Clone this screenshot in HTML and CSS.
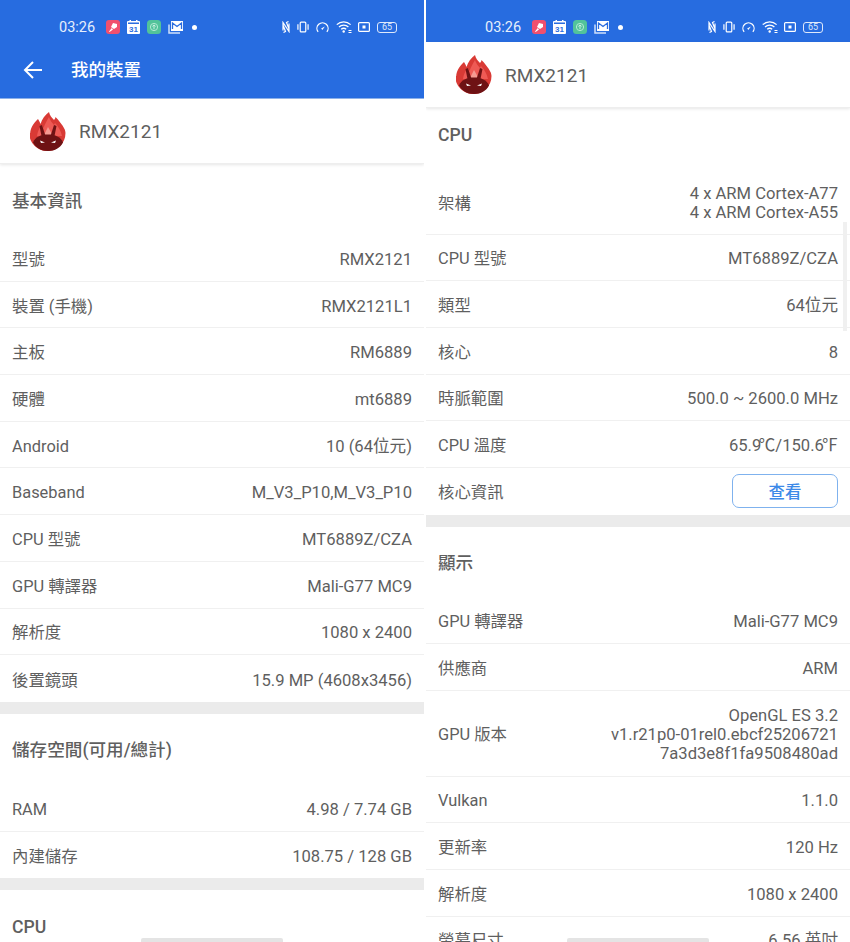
FILE: index.html
```html
<!DOCTYPE html>
<html lang="zh-Hant">
<head>
  <meta charset="UTF-8" />
  <meta name="viewport" content="width=device-width, initial-scale=1.0" />
  <title>我的裝置</title>
  <link rel="stylesheet" href="styles.css">
</head>
<body>
  <svg class="defs" width="0" height="0">
    <symbol id="i-app1" viewBox="0 0 14 14">
      <rect width="14" height="14" rx="3" fill="#f0506e"/>
      <path d="M7 3l4 1 0 3-3 2-3-2zM5.800 8L3 11.500l.6.6L7 9.500z" fill="#fff"/>
    </symbol>
    <symbol id="i-up" viewBox="0 0 14 14">
      <rect width="14" height="14" rx="3.500" fill="#52c39a"/>
      <circle cx="7" cy="7" r="3.600" fill="none" stroke="#b5ead5" stroke-width="1"/>
      <path d="M7 9.200V5M5.400 6.500L7 4.900l1.600 1.600" fill="none" stroke="#d8f5ea" stroke-width=".9"/>
    </symbol>
    <symbol id="i-mail" viewBox="0 0 15 14">
      <path d="M1 4.500v8.500h11" fill="none" stroke="#cfe0fa" stroke-width="1.500"/>
      <rect x="3" y="1" width="12" height="10" fill="#fff"/>
      <path d="M4.500 9V3l4.500 3.500L13.500 3v6" fill="none" stroke="#2a6de0" stroke-width="1.300"/>
    </symbol>
    <symbol id="i-nfc" viewBox="0 0 8 12">
      <path d="M1 9.500V1.500l6 9V2.500M1 4l2.500 6.500L1.500 11.500M7 8L4.500 1.500 6.500.5" fill="none" stroke="#fff" stroke-width="1.200"/>
    </symbol>
    <symbol id="i-vib" viewBox="0 0 13 12">
      <rect x="3.500" y=".7" width="6" height="10.600" rx="1" fill="none" stroke="#fff" stroke-width="1.300"/>
      <path d="M1 3v6M12 3v6" stroke="#fff" stroke-width="1.300"/>
    </symbol>
    <symbol id="i-gauge" viewBox="0 0 14 12">
      <path d="M2.300 11.200A6 6 0 1 1 11.700 11.200" fill="none" stroke="#fff" stroke-width="1.300"/>
      <path d="M5.500 7.500l4-2-2.600 3.600z" fill="#fff"/>
    </symbol>
    <symbol id="i-wifi" viewBox="0 0 16 12">
      <path d="M.8 3.600a10 10 0 0 1 13.800 0M3 6a7 7 0 0 1 9.400 0M5.200 8.300a3.800 3.800 0 0 1 5 0" fill="none" stroke="#fff" stroke-width="1.300"/>
      <circle cx="7.700" cy="10.500" r="1.200" fill="#fff"/>
      <path d="M12.500 9.500h3M12.500 11.500h3" stroke="#fff" stroke-width="1"/>
    </symbol>
    <symbol id="i-box" viewBox="0 0 12 10">
      <rect x=".6" y=".6" width="10.800" height="8.800" rx="1" fill="none" stroke="#fff" stroke-width="1.200"/>
      <rect x="4.500" y="3.500" width="3" height="3" fill="#fff"/>
    </symbol>
    <symbol id="i-logo" viewBox="0 0 36 39">
      <path d="M.2 21C.5 16 3 12 8 7c1 2 2 3 2.500 5C12 7 15 3 19 0c.5 3 3 6 5 8 1-1 1.500-2 1.500-3 3 3 7 8 9 12 .7 1.500 1 3 1 4a18 18 0 0 1-36.300 0z" fill="#d93a35"/>
      <path d="M7 24C8 18 10 15 12 13l1.500 3C15 12 17 8 19 5c1 3 3 6 5 8l1-2c3 3 6 8 7 13z" fill="#ee5a55"/>
      <path d="M14 23l4-8 4.500 8z" fill="#f59a92"/>
      <path d="M3 30.500C5 25 11 22.500 18 22.500S31 25 33 30.500C30 36 25 39 18 39S6 36 3 30.500z" fill="#6e1214"/>
      <path d="M11.500 24l-2-10 2.500-1 3.500 11zM24.500 24l2-10-2.500-1-3.500 11z" fill="#6e1214"/>
      <path d="M10 28.500l5 2-4 .6zM26 28.500l-5 2 4 .6z" fill="#fff"/>
    </symbol>
  </svg>

  <div class="screen">
    <section class="pane">
      <div class="appbar">
        <div class="statusbar">
          <span class="clock">03:26</span>
          <div class="notif-icons">
            <svg class="ic-14"><use href="#i-app1"/></svg>
            <svg class="ic-cal" viewBox="0 0 13 14">
              <rect y="1" width="13" height="13" rx="1" fill="#fff"/>
              <rect x="2.500" width="1.500" height="3" fill="#fff"/>
              <rect x="9" width="1.500" height="3" fill="#fff"/>
              <rect x="1" y="2.500" width="11" height="1.500" fill="#2a6de0"/>
              <text x="6.500" y="12" class="cal-num">31</text>
            </svg>
            <svg class="ic-14"><use href="#i-up"/></svg>
            <svg class="ic-mail"><use href="#i-mail"/></svg>
            <span class="dot"></span>
          </div>
          <div class="sys-icons">
            <svg class="ic-nfc"><use href="#i-nfc"/></svg>
            <svg class="ic-vib"><use href="#i-vib"/></svg>
            <svg class="ic-gauge"><use href="#i-gauge"/></svg>
            <svg class="ic-wifi"><use href="#i-wifi"/></svg>
            <svg class="ic-box"><use href="#i-box"/></svg>
            <span class="battery">65</span>
          </div>
        </div>
        <div class="toolbar">
          <svg class="back" viewBox="0 0 20 20"><path d="M19 10H2M10 2l-8 8 8 8" fill="none" stroke="#fff" stroke-width="2"/></svg>
          <h1>我的裝置</h1>
        </div>
      </div>
      <div class="device short">
        <svg class="logo"><use href="#i-logo"/></svg>
        <span>RMX2121</span>
      </div>

      <h2 class="title">基本資訊</h2>
      <div class="row"><span>型號</span><span>RMX2121</span></div>
      <div class="row"><span>裝置 (手機)</span><span>RMX2121L1</span></div>
      <div class="row"><span>主板</span><span>RM6889</span></div>
      <div class="row"><span>硬體</span><span>mt6889</span></div>
      <div class="row"><span>Android</span><span>10 (64位元)</span></div>
      <div class="row"><span>Baseband</span><span>M_V3_P10,M_V3_P10</span></div>
      <div class="row"><span>CPU 型號</span><span>MT6889Z/CZA</span></div>
      <div class="row"><span>GPU 轉譯器</span><span>Mali-G77 MC9</span></div>
      <div class="row"><span>解析度</span><span>1080 x 2400</span></div>
      <div class="row last"><span>後置鏡頭</span><span>15.9 MP (4608x3456)</span></div>
      <div class="band"></div>

      <h2 class="title">儲存空間(可用/總計)</h2>
      <div class="row"><span>RAM</span><span>4.98 / 7.74 GB</span></div>
      <div class="row last"><span>內建儲存</span><span>108.75 / 128 GB</span></div>
      <div class="band"></div>

      <h2 class="title">CPU</h2>
      <div class="home-bar"></div>
    </section>

    <section class="pane">
      <div class="appbar">
        <div class="statusbar">
          <span class="clock">03:26</span>
          <div class="notif-icons">
            <svg class="ic-14"><use href="#i-app1"/></svg>
            <svg class="ic-cal" viewBox="0 0 13 14">
              <rect y="1" width="13" height="13" rx="1" fill="#fff"/>
              <rect x="2.500" width="1.500" height="3" fill="#fff"/>
              <rect x="9" width="1.500" height="3" fill="#fff"/>
              <rect x="1" y="2.500" width="11" height="1.500" fill="#2a6de0"/>
              <text x="6.500" y="12" class="cal-num">31</text>
            </svg>
            <svg class="ic-14"><use href="#i-up"/></svg>
            <svg class="ic-mail"><use href="#i-mail"/></svg>
            <span class="dot"></span>
          </div>
          <div class="sys-icons">
            <svg class="ic-nfc"><use href="#i-nfc"/></svg>
            <svg class="ic-vib"><use href="#i-vib"/></svg>
            <svg class="ic-gauge"><use href="#i-gauge"/></svg>
            <svg class="ic-wifi"><use href="#i-wifi"/></svg>
            <svg class="ic-box"><use href="#i-box"/></svg>
            <span class="battery">65</span>
          </div>
        </div>
      </div>
      <div class="device">
        <svg class="logo"><use href="#i-logo"/></svg>
        <span>RMX2121</span>
      </div>

      <h2 class="title scrolled">CPU</h2>
      <div class="row tall-2"><span>架構</span><span class="val">4 x ARM Cortex-A77<br>4 x ARM Cortex-A55</span></div>
      <div class="row"><span>CPU 型號</span><span>MT6889Z/CZA</span></div>
      <div class="row"><span>類型</span><span>64位元</span></div>
      <div class="row"><span>核心</span><span>8</span></div>
      <div class="row"><span>時脈範圍</span><span>500.0 ~ 2600.0 MHz</span></div>
      <div class="row"><span>CPU 溫度</span><span>65.9<i class="deg">℃</i>/150.6<i class="deg">℉</i></span></div>
      <div class="row last"><span>核心資訊</span><button class="view-btn">查看</button></div>
      <div class="band"></div>

      <h2 class="title">顯示</h2>
      <div class="row"><span>GPU 轉譯器</span><span>Mali-G77 MC9</span></div>
      <div class="row"><span>供應商</span><span>ARM</span></div>
      <div class="row tall-3"><span>GPU 版本</span><span class="val">OpenGL ES 3.2<br>v1.r21p0-01rel0.ebcf25206721<br>7a3d3e8f1fa9508480ad</span></div>
      <div class="row"><span>Vulkan</span><span>1.1.0</span></div>
      <div class="row"><span>更新率</span><span>120 Hz</span></div>
      <div class="row"><span>解析度</span><span>1080 x 2400</span></div>
      <div class="row"><span>螢幕尺寸</span><span>6.56 英吋</span></div>
      <div class="scrollbar"></div>
      <div class="home-bar"></div>
    </section>
  </div>
</body>
</html>
```

FILE: styles.css
```css
body {
  margin: 0;
  background: #fff;
  font-family: Roboto, "Noto Sans CJK TC", sans-serif;
  color: #5f5f5f;
}
.defs {
  position: absolute;
}
.cal-num {
  font-family: "Liberation Sans", sans-serif;
  font-size: 8px;
  font-weight: 700;
  fill: #2a6de0;
  text-anchor: middle;
}
.screen {
  display: flex;
  gap: 2px;
  height: 942px;
  overflow: hidden;
}
.pane {
  position: relative;
  width: 424px;
  height: 942px;
  overflow: hidden;
}
.appbar {
  background: #276ce0;
  color: #fff;
}
.statusbar {
  display: flex;
  align-items: center;
  height: 42px;
  padding: 12px 27px 0 59px;
  box-sizing: border-box;
}
.clock {
  width: 47px;
  padding-top: 2px;
  font-size: 14.5px;
  line-height: 18px;
  color: #e6effc;
}
.notif-icons {
  display: flex;
  align-items: center;
  gap: 7px;
}
.sys-icons {
  display: flex;
  align-items: center;
  gap: 7px;
  margin-left: auto;
}
.ic-14 { width: 14px; height: 14px; }
.ic-cal { width: 13px; height: 14px; }
.ic-mail { width: 15px; height: 14px; }
.ic-nfc { width: 8px; height: 12px; }
.ic-vib { width: 12px; height: 12px; }
.ic-gauge { width: 13px; height: 12px; }
.ic-wifi { width: 16px; height: 12px; margin-right: -1px; }
.ic-box { width: 12px; height: 10px; }
.dot {
  width: 5px;
  height: 5px;
  border-radius: 50%;
  background: #fff;
  margin-left: 2px;
}
.battery {
  width: 20px;
  height: 11px;
  box-sizing: border-box;
  border: 1px solid #dfe9fb;
  border-radius: 3px;
  font-size: 9px;
  line-height: 9px;
  text-align: center;
  color: #dfe9fb;
}
.toolbar {
  display: flex;
  align-items: center;
  gap: 28px;
  height: 56px;
  padding-left: 23px;
  border-bottom: 1px solid #8fb4ee;
}
.back {
  width: 20px;
  height: 20px;
}
h1 {
  margin: 0;
  font-size: 17.5px;
  line-height: 24px;
  font-weight: 500;
}
.device {
  display: flex;
  align-items: center;
  gap: 13px;
  height: 66px;
  padding-left: 30px;
  box-sizing: border-box;
  font-size: 19px;
  line-height: 24px;
  border-bottom: 1px solid #eee;
  box-shadow: 0 1px 3px rgba(0, 0, 0, 0.1);
}
.device span {
  padding-top: 2px;
}
.device.short {
  height: 65px;
}
.logo {
  width: 36px;
  height: 39px;
}
.title {
  display: flex;
  align-items: center;
  height: 71px;
  margin: 0;
  padding: 2px 12px 0;
  box-sizing: border-box;
  font-size: 17.6px;
  line-height: 24px;
  font-weight: 500;
}
.title.scrolled {
  height: 62px;
  padding-bottom: 10px;
}
.row {
  display: flex;
  align-items: center;
  justify-content: space-between;
  height: 46.7px;
  padding: 0 12px;
  box-sizing: border-box;
  font-size: 16.6px;
  line-height: 22px;
  border-bottom: 1px solid #f0f0f0;
}
.row > span {
  padding-top: 4px;
}
.row > span:first-child {
  font-size: 16.4px;
}
.row.last {
  border-bottom: none;
}
.row.tall-2 {
  height: 64.500px;
}
.row.tall-3 {
  height: 85.500px;
}
.val {
  text-align: right;
  line-height: 19px;
}
.row > .val {
  padding-top: 2px;
}
.deg {
  font-style: normal;
  margin-left: -0.15em;
}
.band {
  height: 12px;
  background: #ebebeb;
}
.view-btn {
  width: 106px;
  height: 34px;
  padding: 0;
  background: #fff;
  border: 1px solid #7fb2ee;
  border-radius: 7px;
  font-family: inherit;
  font-size: 16.5px;
  font-weight: 500;
  color: #3d8ae8;
}
.scrollbar {
  position: absolute;
  top: 222px;
  right: 3px;
  width: 4px;
  height: 109px;
  background: #f0f0f0;
}
.home-bar {
  position: absolute;
  bottom: 0;
  left: 141px;
  width: 142px;
  height: 4px;
  border-radius: 2px 2px 0 0;
  background: #e4e4e4;
}
```
